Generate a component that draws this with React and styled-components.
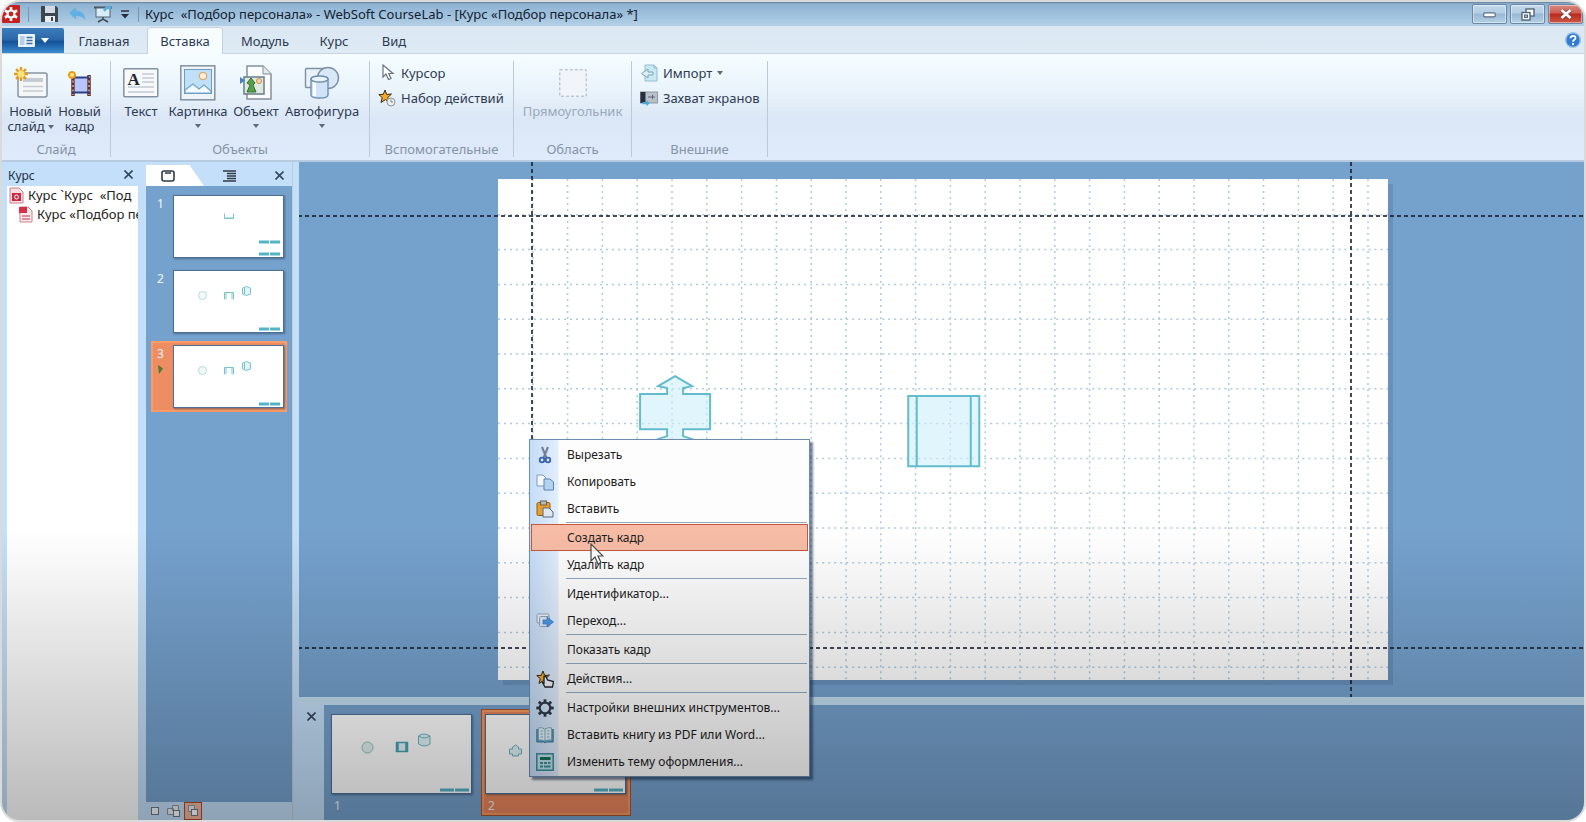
import React from "react";
import styled, { createGlobalStyle, css } from "styled-components";

const Global = createGlobalStyle`
  * { box-sizing: border-box; }
  body { margin: 0; background: #fff; }
  button { font: inherit; color: inherit; background: none; border: 0; padding: 0; margin: 0; cursor: default; text-align: left; }
  svg { display: block; flex: none; }
`;

const Window = styled.div`
  position: relative;
  display: flex;
  flex-direction: column;
  min-height: 100vh;
  overflow: hidden;
  border: 2px solid #dadada;
  border-radius: 20px;
  background: #c3dff9;
  font-family: "Noto Sans", "Open Sans", sans-serif;
  font-size: 12px;
  line-height: 15px;
  color: #2c3a52;
`;

const Shade = styled.div`
  position: absolute;
  inset: auto 0 0 0;
  height: 290px;
  background: linear-gradient(rgba(0, 0, 0, 0), rgba(0, 0, 0, 0.27));
  pointer-events: none;
`;

/* Title bar */
const TitleBar = styled.header`
  display: flex;
  align-items: center;
  height: 24px;
  padding-right: 1px;
  background: linear-gradient(#5f7f9c 0, #8fb4d3 2px, #9cbfdb 12px, #b4d0e6 100%);
`;
const QuickTools = styled.div`
  display: flex;
  align-items: center;
  gap: 8px;
`;
const Divider = styled.span`
  width: 1px;
  height: 15px;
  background: #7d93aa;
`;
const Title = styled.h1`
  flex: 1;
  margin: 0 0 0 6px;
  font-size: 13px;
  line-height: 20px;
  font-weight: 400;
  color: #14202f;
  white-space: pre;
  overflow: hidden;
`;
const WindowButtons = styled.div`
  display: flex;
  gap: 3px;
`;
const WindowButton = styled.button`
  display: flex;
  align-items: center;
  justify-content: center;
  width: 35px;
  height: 20px;
  border: 1px solid #6d86a3;
  border-radius: 2px;
  box-shadow: inset 0 0 0 1px rgba(255, 255, 255, 0.45);
  background: ${(p) =>
    p.$danger
      ? "linear-gradient(#d98a80 0, #cd5c50 45%, #b8281e 50%, #cf5a45 100%)"
      : "linear-gradient(#c3d8ea 0, #b3cde4 45%, #98b8d4 50%, #b4d0e6 100%)"};
`;

/* Tab strip */
const TabStrip = styled.nav`
  display: flex;
  align-items: flex-end;
  height: 28px;
  font-size: 13px;
  background: linear-gradient(#dbe7f3, #deebf4);
  border-bottom: 1px solid #c6d5e2;
`;
const AppButton = styled.button`
  display: flex;
  align-items: center;
  justify-content: center;
  gap: 6px;
  width: 62px;
  height: 25px;
  background: linear-gradient(#3d7cbb 0, #2a68aa 45%, #14529a 55%, #3a8bd0 100%);
  border-radius: 0 2px 0 0;
`;
const Tabs = styled.div`
  display: flex;
  flex: 1;
  gap: 4px;
  margin-bottom: -1px;
`;
const Tab = styled.button`
  width: ${(p) => p.$w}px;
  height: 26px;
  text-align: center;
  border-radius: 3px 3px 0 0;
  ${(p) =>
    p.$active &&
    css`
      background: #f7fdff;
      box-shadow: 0 -1px 0 #c3d0dd, 1px 0 0 #c3d0dd, -1px 0 0 #c3d0dd;
    `}
`;
const HelpButton = styled.button`
  align-self: center;
  margin-right: 3px;
`;

/* Ribbon */
const Ribbon = styled.div`
  display: flex;
  height: 108px;
  padding: 7px 0 3px;
  font-size: 13px;
  background: linear-gradient(#f5fdff 0, #e9f3fb 35%, #dbe7f6 60%, #dfeafa 100%);
  border-bottom: 2px solid #b6cbe0;
`;
const Group = styled.section`
  display: flex;
  flex-direction: column;
  width: ${(p) => p.$w}px;
  border-right: 1px solid #bccad8;
`;
const GroupBody = styled.div`
  display: flex;
  flex: 1;
  padding: ${(p) => (p.$column ? "0 4px" : "1px 4px 0")};
  flex-direction: ${(p) => (p.$column ? "column" : "row")};
  justify-content: ${(p) => (p.$center ? "center" : "flex-start")};
  gap: ${(p) => (p.$column ? 1 : 0)}px;
`;
const GroupLabel = styled.div`
  text-align: center;
  color: #8494a6;
`;
const BigButton = styled.button`
  display: flex;
  flex-direction: column;
  align-items: center;
  align-self: flex-start;
  width: ${(p) => p.$w}px;
  text-align: center;
  white-space: nowrap;
  color: ${(p) => (p.disabled ? "#9aa8b8" : "inherit")};
`;
const IconSlot = styled.span`
  display: flex;
  align-items: center;
  justify-content: center;
  height: 42px;
`;
const Arrow = styled.span`
  display: inline-block;
  border: 3px solid transparent;
  border-top: 4px solid #5c6878;
  border-bottom: 0;
  vertical-align: 2px;
  margin: ${(p) => (p.$under ? "5px 0 0" : p.$flush ? 0 : "0 0 0 3px")};
`;
const SmallButton = styled.button`
  display: flex;
  align-items: center;
  gap: 5px;
  height: 24px;
  padding-left: 4px;
  white-space: nowrap;
`;

/* Workspace */
const Workspace = styled.div`
  display: flex;
  flex: 1;
`;
const PanelHeader = styled.div`
  display: flex;
  justify-content: space-between;
  align-items: center;
  height: 24px;
`;
const CoursePanel = styled.aside`
  display: flex;
  flex-direction: column;
  width: 144px;
  padding: 0 8px 0 5px;
`;
const PanelTitle = styled.h2`
  margin: 0;
  padding: 2px 0 0 1px;
  font-size: 12px;
  font-weight: 400;
  color: #22303f;
`;
const CloseButton = styled.button`
  display: flex;
  align-items: center;
  justify-content: center;
  width: 20px;
  height: 20px;
`;
const Tree = styled.div`
  flex: 1;
  overflow: hidden;
  background: #fff;
  font-size: 13px;
`;
const TreeItem = styled.button`
  display: flex;
  align-items: center;
  gap: 4px;
  height: 19px;
  padding-left: ${(p) => p.$indent}px;
  white-space: pre;
  color: #222;
`;
const SlidesPanel = styled.aside`
  display: flex;
  flex-direction: column;
  width: 146px;
`;
const SlidesHeader = styled(PanelHeader)`
  padding: 3px 3px 0 0;
`;
const ViewTab = styled.button`
  display: flex;
  align-items: center;
  height: 21px;
  width: 58px;
  padding-left: 15px;
  ${(p) =>
    p.$active &&
    css`
      background: #fff;
      clip-path: polygon(0 0, 75% 0, 100% 100%, 0 100%);
    `}
`;
const SlideList = styled.div`
  display: flex;
  flex-direction: column;
  gap: 4px;
  flex: 1;
  padding: 5px 5px 0 5px;
  background: #75a1cd;
`;
const SlideItem = styled.button`
  display: flex;
  justify-content: space-between;
  height: 71px;
  padding: 5px 4px 0 6px;
  color: #f2f7fc;
  ${(p) => p.$active && "background: #ee8d62; box-shadow: inset 0 0 0 2px #fb9b66;"}
`;
const SlideMark = styled.span`
  display: flex;
  flex-direction: column;
  gap: 4px;
`;
const Thumb = styled.svg`
  background: #fff;
  box-shadow: 0 0 0 1px #4d6f93, 1px 1px 2px 1px rgba(30, 55, 85, 0.5);
`;
const ViewFooter = styled.div`
  display: flex;
  gap: 1px;
  height: 18px;
`;
const ViewButton = styled.button`
  display: flex;
  align-items: center;
  justify-content: center;
  width: 18px;
  height: 18px;
  ${(p) => p.$active && "border: 1px solid #b04a2c; background: #f0b79c;"}
`;
const Main = styled.main`
  position: relative;
  display: flex;
  flex: 1;
  flex-direction: column;
  min-width: 0;
  border-left: 1px solid #c3ccd2;
  padding-left: 6px;
`;
const Canvas = styled.div`
  display: flex;
  flex: 1;
  align-items: center;
  justify-content: center;
  overflow: hidden;
  background: #75a1cd;
`;
const Page = styled.div`
  position: relative;
  width: 69.3%;
  margin-left: 3px;
  aspect-ratio: 890 / 501;
  background: #fff;
  box-shadow: 5px 5px 0 #6890ba;
`;
const PageArt = styled.svg`
  width: 100%;
  height: 100%;
`;
const Guide = styled.i`
  position: absolute;
  ${(p) =>
    p.$vertical
      ? css`
          top: -100vh;
          bottom: -100vh;
          width: 2px;
          background: repeating-linear-gradient(rgba(22, 30, 48, 0.8) 0 4px, transparent 4px 7px);
        `
      : css`
          left: -100vw;
          right: -100vw;
          height: 2px;
          background: repeating-linear-gradient(90deg, rgba(22, 30, 48, 0.8) 0 4px, transparent 4px 7px);
        `}
  ${(p) => p.$side}: ${(p) => p.$at}px;
`;
const Frames = styled.div`
  display: flex;
  height: 123px;
  border-top: 8px solid #c3dff2;
`;
const FramesSide = styled.div`
  width: 25px;
  padding: 1px 2px;
  background: #c3dff9;
`;
const FrameList = styled.div`
  display: flex;
  flex: 1;
  gap: 4px;
  padding: 4px 3px;
  background: #75a1cd;
`;
const FrameItem = styled.button`
  display: flex;
  flex-direction: column;
  align-items: flex-start;
  gap: 5px;
  width: 150px;
  height: 107px;
  padding: 6px 5px;
  color: #eef3f8;
  ${(p) => p.$active && "background: #ea865c; box-shadow: inset 0 0 0 1px #a85433, inset 0 0 0 3px #f79a5e;"}
`;
const FrameNumber = styled.span`
  padding-left: 2px;
`;

/* Context menu */
const Menu = styled.div`
  position: absolute;
  left: 236px;
  top: 277px;
  width: 281px;
  padding: 1px;
  border: 1px solid #6a8cb0;
  background: linear-gradient(90deg, #c5dcf8 0, #e2eefc 28px, #fdfdfe 29px);
  box-shadow: 3px 3px 2px rgba(20, 40, 70, 0.55);
  color: #1c1c1c;
`;
const MenuItem = styled.button`
  display: flex;
  align-items: center;
  width: 100%;
  height: 27px;
  padding-left: 5px;
  gap: 13px;
  ${(p) =>
    p.$active &&
    css`
      background: #f6bca6;
      box-shadow: inset 0 0 0 1px #c4573c;
    `}
`;
const MenuIcon = styled.span`
  display: flex;
  width: 18px;
`;
const MenuLine = styled.hr`
  height: 1px;
  margin: 0 1px 1px 35px;
  border: 0;
  background: #93a9c0;
`;
const Pointer = styled.svg`
  position: absolute;
  left: 297px;
  top: 381px;
  pointer-events: none;
`;

const Svg = ({ w = 18, h = w, box, children }) => (
  <svg width={w} height={h} viewBox={box || `0 0 ${w} ${h}`} fill="none" aria-hidden="true">
    {children}
  </svg>
);

const Spark = ({ x, y, r }) => (
  <g transform={`translate(${x} ${y})`} stroke="#e79a18" strokeWidth="2.400">
    {[0, 45, 90, 135].map((a) => (
      <path key={a} d={`M0 ${-r}V${r}`} transform={`rotate(${a})`} />
    ))}
    <circle r={r / 2} fill="#ffe27a" stroke="none" />
  </g>
);

const Close = () => (
  <Svg w={9}>
    <path d="M0.5 0.5L8.500 8.500M8.500 0.500L0.500 8.500" stroke="#33475e" strokeWidth="1.600" />
  </Svg>
);

const Star = ({ children }) => (
  <Svg w={18}>
    <path d="M7 1l1.700 4.500 4.800-.5-3.600 3.400 1.800 5L7.500 10.600 3 13.500l1.200-5L.8 5.600l4.500-.3z" fill="#f3a92a" stroke="#3a2c14" />
    {children}
  </Svg>
);

const NewSlideIcon = () => (
  <Svg w={36} h={34}>
    <rect x="5" y="7" width="29" height="24" rx="2" fill="#f4f6f8" stroke="#8794a2" strokeWidth="1.500" />
    <rect x="10" y="12" width="20" height="4" fill="#c5cbd2" />
    <path d="M10 20.500h20M10 25h20" stroke="#c5cbd2" strokeWidth="1.500" />
    <Spark x={8} y={8} r={7} />
  </Svg>
);
const NewFrameIcon = () => (
  <Svg w={26} h={30}>
    <path d="M6 7v21M22 7v21" stroke="#5c2f2c" strokeWidth="3.500" />
    <path d="M6 8v19M22 8v19" stroke="#e6cfc4" strokeWidth="1.200" strokeDasharray="2 2.500" />
    <rect x="8" y="9" width="12" height="15" fill="#b9c6fb" />
    <path d="M6 9.500h16M6 24.500h16" stroke="#2c3f86" strokeWidth="2" />
    <Spark x={5} y={7} r={4} />
  </Svg>
);
const TextIcon = () => (
  <Svg w={36} h={32}>
    <rect x=".8" y="1.800" width="34" height="28" rx="1" fill="#f7f9fb" stroke="#8391a1" strokeWidth="1.500" />
    <path d="M19 7h12M19 11h12M19 15h12M5 20h26M5 25h26" stroke="#c3cad3" strokeWidth="1.500" />
    <text x="4.500" y="17.500" fontFamily="Liberation Serif, serif" fontWeight="700" fontSize="17" fill="#1c2430">A</text>
  </Svg>
);
const PictureIcon = () => (
  <Svg w={36} h={36}>
    <rect x=".8" y=".8" width="34" height="34" fill="#eef3f7" stroke="#8391a1" strokeWidth="1.500" />
    <rect x="4.500" y="4.500" width="27" height="24" fill="#bfe0f7" stroke="#6d9cc2" />
    <circle cx="23" cy="11" r="3.700" fill="#fdf0d8" stroke="#e0a870" strokeWidth="1.300" />
    <path d="M5 25l8-6 6 5 5-4 7 6v2H5z" fill="#f4fafe" stroke="#6ea5d0" strokeWidth="1.200" />
  </Svg>
);
const ObjectIcon = () => (
  <Svg w={34} h={36}>
    <path d="M8 1h16l8 8v25H8z" fill="#fafbfc" stroke="#858f9a" strokeWidth="1.500" />
    <path d="M24 1v8h8" fill="#e4e8ec" stroke="#858f9a" />
    <rect x="5" y="12" width="20" height="17" fill="#dfe9e4" stroke="#6a7c88" strokeWidth="1.500" />
    <path d="M8 27l3-7-3-2 4-5 4 5-2 2 3 7z" fill="#57a04b" stroke="#35702f" />
    <circle cx="20" cy="16" r="2.500" fill="#f7d9b8" stroke="#d48840" />
    <path d="M1 12l5 3.500L1 19z" fill="#4a80bb" />
  </Svg>
);
const ShapeIcon = () => (
  <Svg w={36} h={34}>
    <rect x="1.500" y="2.500" width="21" height="19" rx="1" fill="#eaf2f9" stroke="#7f90a2" strokeWidth="1.400" />
    <circle cx="24" cy="12" r="10.500" fill="#d9e8f6" stroke="#7f90a2" strokeWidth="1.400" />
    <path d="M7 13v16c0 4 17 4 17 0V13z" fill="#cfe4f8" stroke="#6f8fb0" strokeWidth="1.400" />
    <path d="M10.500 16v14" stroke="#fff" strokeWidth="3" />
    <ellipse cx="15.500" cy="13" rx="8.500" ry="3" fill="#eaf4fd" stroke="#6f8fb0" strokeWidth="1.400" />
  </Svg>
);
const ArrowIcon = () => (
  <Svg w={18}>
    <path d="M5 1v12l3-3 2.500 5.500 2.500-1-2.300-5H15z" fill="#fff" stroke="#68727e" strokeWidth="1.200" />
  </Svg>
);
const ActionSetIcon = () => (
  <Star>
    <circle cx="13" cy="13" r="4" fill="#eceeef" stroke="#8d949b" />
    <path d="M13 10.500V13h2" stroke="#7d858d" />
  </Star>
);
const ImportIcon = () => (
  <Svg w={18}>
    <path d="M5 1h9l3 3v13H5z" fill="#c9eaf4" stroke="#8fbccb" />
    <path d="M14 1v3h3" stroke="#8fbccb" />
    <path d="M13 8H8V5L1.500 9.500 8 14v-3h5z" fill="#dbeef6" stroke="#7aa5ba" />
  </Svg>
);
const CaptureIcon = () => (
  <Svg w={18}>
    <rect x=".5" y="3" width="17" height="11" fill="#b9c0ca" stroke="#8e97a3" />
    <rect x=".5" y="3" width="5" height="11" fill="#26303e" />
    <path d="M8 8h7M12.500 6v4" stroke="#5c6775" />
    <path d="M2.500 13h4v-2l3 3.200-3 3v-2h-4z" fill="#48a8dc" />
  </Svg>
);

const Bars = ({ x, y, w }) => (
  <path d={`M${x} ${y}h${w}M${x + w + 1} ${y}h${w}`} stroke="#55b3c6" strokeWidth="3" />
);

const SlideArt = ({ first }) => (
  <Thumb width="109" height="61" viewBox="0 0 109 61" fill="none" aria-hidden="true">
    {first ? (
      <>
        <path d="M50.500 17.500v5h9v-5M51 22h8" stroke="#7cc3d0" />
        <Bars x={85} y={46} w={10} />
      </>
    ) : (
      <>
        <circle cx="28.500" cy="24.500" r="4" stroke="#b9d8df" fill="#f1f9fb" />
        <path d="M50.500 28.500v-7h9v7M52 21v7M58 21v7" stroke="#7cc3d0" />
        <path d="M68.500 17v6q3.500 3 8 0v-6q-4-3-8 0M70.500 17v6" stroke="#7cc3d0" fill="#e2f4f8" />
      </>
    )}
    <Bars x={85} y={58} w={10} />
  </Thumb>
);

const FrameArt = ({ second }) => (
  <Thumb width="139" height="78" viewBox="0 0 139 78" fill="none" aria-hidden="true">
    {second ? (
      <path d="M23.500 34h3v-2l3-2 3 2v2h3v5h-3v2h-6v-2h-3z" stroke="#6db5c4" fill="#dff2f6" />
    ) : (
      <>
        <circle cx="35.500" cy="32.500" r="5.500" stroke="#8fc0c4" fill="#e2f2f0" />
        <path d="M64.500 27.500h11v9h-11zM66 27v9M74 27v9" stroke="#49a3b5" strokeWidth="1.500" fill="#e2f4f8" />
        <path d="M86.500 21v8q6 4 11.500 0v-8q-6-4-11.500 0q6 4 11.500 0" stroke="#6db5c4" fill="#e2f4f8" />
      </>
    )}
    <Bars x={108} y={75} w={14} />
  </Thumb>
);

const menuItems = [
  {
    text: "Вырезать",
    icon: (
      <Svg>
        <path d="M6 1l4.500 11M12 1L7.500 12" stroke="#6e7f96" strokeWidth="2" />
        <circle cx="6" cy="14" r="2.300" stroke="#3b64a8" strokeWidth="1.800" />
        <circle cx="12" cy="14" r="2.300" stroke="#3b64a8" strokeWidth="1.800" />
      </Svg>
    ),
  },
  {
    text: "Копировать",
    icon: (
      <Svg>
        <path d="M1 2h6l3 3v8H1z" fill="#f2f8fe" stroke="#7d9cc0" />
        <path d="M8 6h6l3.500 3v8H8z" fill="#b4d3f2" stroke="#5d83b0" />
      </Svg>
    ),
  },
  {
    text: "Вставить",
    icon: (
      <Svg>
        <rect x="1" y="2.500" width="13" height="13" rx="1.500" fill="#e8a02c" stroke="#8c5a18" />
        <rect x="4.500" y="1" width="6" height="4" fill="#b3bac2" stroke="#6d6049" />
        <path d="M7 8h6l4 4v5H7z" fill="#dfe8f2" stroke="#56677c" />
      </Svg>
    ),
    line: true,
  },
  { text: "Создать кадр", active: true },
  { text: "Удалить кадр", line: true },
  { text: "Идентификатор..." },
  {
    text: "Переход...",
    icon: (
      <Svg>
        <rect x="1" y="2" width="12" height="9" rx="1" fill="#edf3fa" stroke="#8fa3b8" />
        <rect x="3.500" y="4.500" width="10" height="10" rx="1" fill="#dce8f5" stroke="#8fa3b8" />
        <path d="M7 8h4V5l6.500 5-6.500 5v-3H7z" fill="#4f97e6" stroke="#3a77bf" strokeWidth=".7" />
      </Svg>
    ),
    line: true,
  },
  { text: "Показать кадр", line: true },
  {
    text: "Действия...",
    icon: (
      <Star>
        <path d="M8 6.500v6.500l-1.500-.5L9 17h7.500l1-5.500-6-1.500L10 6.500z" fill="#f2f4f6" stroke="#20242c" strokeWidth="1.300" />
      </Star>
    ),
    line: true,
  },
  {
    text: "Настройки внешних инструментов...",
    icon: (
      <Svg>
        <circle cx="9" cy="9" r="5.300" stroke="#2f3a4b" strokeWidth="2.200" />
        {[0, 45, 90, 135, 180, 225, 270, 315].map((a) => (
          <path key={a} d="M9 3.500V.3" stroke="#2f3a4b" strokeWidth="2.800" transform={`rotate(${a} 9 9)`} />
        ))}
      </Svg>
    ),
  },
  {
    text: "Вставить книгу из PDF или Word...",
    icon: (
      <Svg>
        <path d="M.8 3v13h7l1.200 1 1.200-1h7V3" fill="#5d9fc0" stroke="#3f7fa0" />
        <path d="M2.500 1.800Q6 1 9 3.200 12 1 15.500 1.800V14Q12 13.500 9 15 6 13.500 2.500 14z" fill="#e6f3f8" stroke="#7fb0c6" />
        <path d="M9 3v12M4.500 5h2.500M4.500 8h2.500M11 5h2.500M11 8h2.500M4.500 11h2.500M11 11h2.500" stroke="#7fb0c6" />
      </Svg>
    ),
  },
  {
    text: "Изменить тему оформления...",
    icon: (
      <Svg>
        <rect x=".8" y=".8" width="16.400" height="16.400" fill="#bfe6ea" stroke="#3a8c9c" strokeWidth="1.500" />
        <rect x="4" y="4" width="10.500" height="3" fill="#176f5b" />
        <path d="M4 9h3v2H4zM8 9h3v2H8zM12 9h2.500v2H12zM4 12.500h3v2H4zM8 12.500h6.500v2H8z" fill="#3d8f9b" />
      </Svg>
    ),
  },
];

export default function App() {
  return (
    <Window>
      <Global />
      <TitleBar>
        <QuickTools>
          <Svg w={18} h={18}>
            <rect width="18" height="18" rx="1" fill="#c8201f" />
            <g stroke="#fff" strokeWidth="2.600">
              {[0, 60, 120].map((a) => (
                <path key={a} d="M9 2v14" transform={`rotate(${a} 9 9)`} />
              ))}
            </g>
            <circle cx="9" cy="9" r="4.500" fill="#fff" />
            <circle cx="9" cy="9" r="2.400" fill="#c8201f" />
          </Svg>
          <Divider />
          <button aria-label="Сохранить">
            <Svg w={24} h={18}>
              <path d="M4 1h15l2 2v14H4z" fill="#3c4550" />
              <rect x="8" y="1" width="10" height="7" fill="#cfdae4" />
              <rect x="8" y="11" width="10" height="6" fill="#e9eef2" />
              <rect x="14" y="12" width="2" height="4" fill="#3c4550" />
            </Svg>
          </button>
          <button aria-label="Отменить">
            <Svg w={17} h={14}>
              <path d="M0 6l7-6v3.500q9 0 9.500 10-3-5-9.500-4.500v3.500z" fill="#63b1e4" />
            </Svg>
          </button>
          <button aria-label="Просмотр">
            <Svg w={18} h={18}>
              <path d="M0 2.500h18" stroke="#47525e" strokeWidth="2" />
              <rect x="2" y="3" width="14" height="9" fill="#d9ecf7" stroke="#566370" />
              <path d="M9 12v2M4 17l5-3 5 3" stroke="#3e4853" strokeWidth="1.500" />
              <path d="M9 5q2-4 6-4V0l3 2.500L15 5V4q-3 0-4 3z" fill="#5aaee0" />
            </Svg>
          </button>
          <button aria-label="Настройка панели">
            <Svg w={10} h={9}>
              <path d="M1 1h8" stroke="#27303a" strokeWidth="1.500" />
              <path d="M1 4h8L5 8.500z" fill="#27303a" />
            </Svg>
          </button>
          <Divider />
        </QuickTools>
        <Title>{"Курс  «Подбор персонала» - WebSoft CourseLab - [Курс «Подбор персонала» *]"}</Title>
        <WindowButtons>
          <WindowButton aria-label="Свернуть">
            <Svg w={13} h={7}>
              <rect x=".8" y="1.800" width="11.400" height="4" rx="1" fill="#fff" stroke="#5b6d82" strokeWidth="1.200" />
            </Svg>
          </WindowButton>
          <WindowButton aria-label="Восстановить">
            <Svg w={14} h={13}>
              <rect x="5" y="1" width="8" height="7" fill="#fff" stroke="#55667b" strokeWidth="1.400" />
              <rect x="1" y="4.500" width="8" height="7.500" fill="#fff" stroke="#55667b" strokeWidth="1.400" />
              <rect x="3.500" y="7" width="3" height="2.500" fill="#9dbbd6" stroke="#55667b" />
            </Svg>
          </WindowButton>
          <WindowButton $danger aria-label="Закрыть">
            <Svg w={12} h={10}>
              <path d="M1.500 1l9 8M10.500 1l-9 8" stroke="#6e4a4a" strokeWidth="4" />
              <path d="M1.500 1l9 8M10.500 1l-9 8" stroke="#fff" strokeWidth="2.600" />
            </Svg>
          </WindowButton>
        </WindowButtons>
      </TitleBar>

      <TabStrip>
        <AppButton aria-label="Меню приложения">
          <Svg w={17} h={13}>
            <rect width="17" height="13" rx="1" fill="#e9f3fb" />
            <path d="M8.500 3.500h6M8.500 6.500h6M8.500 9.500h6" stroke="#3d6ea3" strokeWidth="1.500" />
            <rect x="2" y="2" width="4.500" height="9" fill="#b5cfe8" />
          </Svg>
          <Svg w={8} h={5}>
            <path d="M0 0h8L4 5z" fill="#fff" />
          </Svg>
        </AppButton>
        <Tabs>
          <Tab $w={80}>Главная</Tab>
          <Tab $w={74} $active>Вставка</Tab>
          <Tab $w={78}>Модуль</Tab>
          <Tab $w={52}>Курс</Tab>
          <Tab $w={60}>Вид</Tab>
        </Tabs>
        <HelpButton aria-label="Справка">
          <Svg w={16}>
            <circle cx="8" cy="8" r="7.300" fill="#2f7bd6" stroke="#9dc0e6" strokeWidth="1.400" />
            <path d="M5.500 6.300C5.500 3 10.700 3 10.500 6 10.400 7.800 8 7.800 8 9.800M8 11v2" stroke="#fff" strokeWidth="1.800" />
          </Svg>
        </HelpButton>
      </TabStrip>

      <Ribbon>
        <Group $w={109}>
          <GroupBody>
            <BigButton $w={49}>
              <IconSlot><NewSlideIcon /></IconSlot>
              <span>Новый<br />слайд<Arrow /></span>
            </BigButton>
            <BigButton $w={49}>
              <IconSlot><NewFrameIcon /></IconSlot>
              <span>Новый<br />кадр</span>
            </BigButton>
          </GroupBody>
          <GroupLabel>Слайд</GroupLabel>
        </Group>
        <Group $w={259}>
          <GroupBody>
            <BigButton $w={52}>
              <IconSlot><TextIcon /></IconSlot>
              Текст
            </BigButton>
            <BigButton $w={62}>
              <IconSlot><PictureIcon /></IconSlot>
              Картинка
              <Arrow $under />
            </BigButton>
            <BigButton $w={54}>
              <IconSlot><ObjectIcon /></IconSlot>
              Объект
              <Arrow $under />
            </BigButton>
            <BigButton $w={78}>
              <IconSlot><ShapeIcon /></IconSlot>
              Автофигура
              <Arrow $under />
            </BigButton>
          </GroupBody>
          <GroupLabel>Объекты</GroupLabel>
        </Group>
        <Group $w={144}>
          <GroupBody $column>
            <SmallButton><ArrowIcon />Курсор</SmallButton>
            <SmallButton><ActionSetIcon />Набор действий</SmallButton>
          </GroupBody>
          <GroupLabel>Вспомогательные</GroupLabel>
        </Group>
        <Group $w={118}>
          <GroupBody $center>
            <BigButton $w={104} disabled>
              <IconSlot>
                <Svg w={28}>
                  <rect x=".8" y=".8" width="26.400" height="26.400" fill="#f1f5f9" stroke="#a9b3be" strokeDasharray="3 2" />
                </Svg>
              </IconSlot>
              Прямоугольник
            </BigButton>
          </GroupBody>
          <GroupLabel>Область</GroupLabel>
        </Group>
        <Group $w={136}>
          <GroupBody $column>
            <SmallButton><ImportIcon />Импорт<Arrow $flush /></SmallButton>
            <SmallButton><CaptureIcon />Захват экранов</SmallButton>
          </GroupBody>
          <GroupLabel>Внешние</GroupLabel>
        </Group>
      </Ribbon>

      <Workspace>
        <CoursePanel>
          <PanelHeader>
            <PanelTitle>Курс</PanelTitle>
            <CloseButton aria-label="Закрыть панель курса"><Close /></CloseButton>
          </PanelHeader>
          <Tree>
            <TreeItem $indent={2}>
              <Svg w={15} h={17}>
                <path d="M1 1h9l4 4v11H1z" fill="#f6dfe3" stroke="#c9808c" />
                <rect x="3" y="6" width="9" height="8" fill="#cf2740" />
                <circle cx="7.500" cy="10" r="2" stroke="#fff" />
              </Svg>
              {"Курс `Курс  «Под"}
            </TreeItem>
            <TreeItem $indent={11}>
              <Svg w={15} h={17}>
                <path d="M2 1h8l4 4v11H2z" fill="#fbeaec" stroke="#c9808c" />
                <rect x="1" y="1" width="8" height="6" fill="#d62f48" />
                <path d="M4 10h8M4 13h8" stroke="#cf7080" strokeWidth="1.300" />
              </Svg>
              Курс «Подбор пе
            </TreeItem>
          </Tree>
        </CoursePanel>

        <SlidesPanel>
          <SlidesHeader>
            <ViewTab $active aria-label="Эскизы">
              <Svg w={14} h={12}>
                <rect x="1" y="1" width="12" height="10" rx="2" stroke="#303a44" strokeWidth="1.600" />
                <path d="M4 3h6" stroke="#303a44" strokeWidth="1.500" />
              </Svg>
            </ViewTab>
            <ViewTab aria-label="Структура">
              <Svg w={14} h={12}>
                <path d="M0 1h13M4 3.500h9M4 6h9M4 8.500h9M0 11h13" stroke="#303a44" strokeWidth="1.500" />
              </Svg>
            </ViewTab>
            <CloseButton aria-label="Закрыть панель слайдов"><Close /></CloseButton>
          </SlidesHeader>
          <SlideList>
            {[1, 2, 3].map((n) => (
              <SlideItem key={n} $active={n === 3}>
                <SlideMark>
                  {n}
                  {n === 3 && (
                    <Svg w={8} h={9}>
                      <path d="M1 0l5 3.500L2 9z" fill="#4f7a35" />
                    </Svg>
                  )}
                </SlideMark>
                <SlideArt first={n === 1} />
              </SlideItem>
            ))}
          </SlideList>
          <ViewFooter>
            <ViewButton aria-label="Один">
              <Svg w={8}><rect x=".5" y=".5" width="7" height="7" fill="#f5f8fa" stroke="#6b7785" /></Svg>
            </ViewButton>
            <ViewButton aria-label="Несколько">
              <Svg w={14} h={12}>
                <path d="M.5 3.500h6v6h-6zM5.500.5h6v5h-6z" fill="#e9eef2" stroke="#8a95a2" />
                <rect x="6.500" y="5.500" width="6" height="6" fill="#fff" stroke="#6b7785" />
              </Svg>
            </ViewButton>
            <ViewButton $active aria-label="Вложенные">
              <Svg w={12} h={12}>
                <path d="M1.500.5h6v6h-6z" fill="#e9eef2" stroke="#8a95a2" />
                <rect x="4.500" y="4.500" width="6" height="6" fill="#fff" stroke="#6b7785" />
              </Svg>
            </ViewButton>
          </ViewFooter>
        </SlidesPanel>

        <Main>
          <Canvas>
            <Page>
              <PageArt viewBox="0 0 890 501" fill="none" aria-label="Слайд">
                <g stroke="#b0c9dd" strokeWidth="1.500" strokeDasharray="2 4">
                  {Array.from({ length: 25 }, (_, i) => (
                    <path key={"v" + i} d={`M${(i + 1) * 34.78} 0V501`} />
                  ))}
                  {Array.from({ length: 14 }, (_, i) => (
                    <path key={"h" + i} d={`M0 ${(i + 1) * 34.78 + 1}H890`} />
                  ))}
                </g>
                <g fill="#cdeefc" fillOpacity=".6" stroke="#62bccd" strokeWidth="2">
                  <path d="M177 197L160 207L169 209V215H142V250H169V257L160 260L177 269L194 260L185 257V250H212V215H185V209L194 207Z" />
                  <path d="M410 217H481V287H410ZM418.500 217V287M472.500 217V287" />
                </g>
              </PageArt>
              <Guide $vertical $side="left" $at={33} />
              <Guide $vertical $side="right" $at={36} />
              <Guide $side="top" $at={36} />
              <Guide $side="bottom" $at={31} />
            </Page>
          </Canvas>
          <Frames>
            <FramesSide>
              <CloseButton aria-label="Закрыть панель кадров"><Close /></CloseButton>
            </FramesSide>
            <FrameList>
              <FrameItem>
                <FrameArt />
                <FrameNumber>1</FrameNumber>
              </FrameItem>
              <FrameItem $active>
                <FrameArt second />
                <FrameNumber>2</FrameNumber>
              </FrameItem>
            </FrameList>
          </Frames>
          <Menu role="menu">
            {menuItems.map((m) => (
              <React.Fragment key={m.text}>
                <MenuItem role="menuitem" $active={m.active}>
                  <MenuIcon>{m.icon}</MenuIcon>
                  {m.text}
                </MenuItem>
                {m.line && <MenuLine />}
              </React.Fragment>
            ))}
          </Menu>
          <Pointer width="14" height="22" viewBox="0 0 14 22" aria-hidden="true">
            <path d="M1 1v17l4-4 3 7 3-1.500-3-6.500h5z" fill="#fff" fillOpacity=".8" stroke="#4a4a4a" strokeWidth="1.200" />
          </Pointer>
        </Main>
      </Workspace>
      <Shade />
    </Window>
  );
}
